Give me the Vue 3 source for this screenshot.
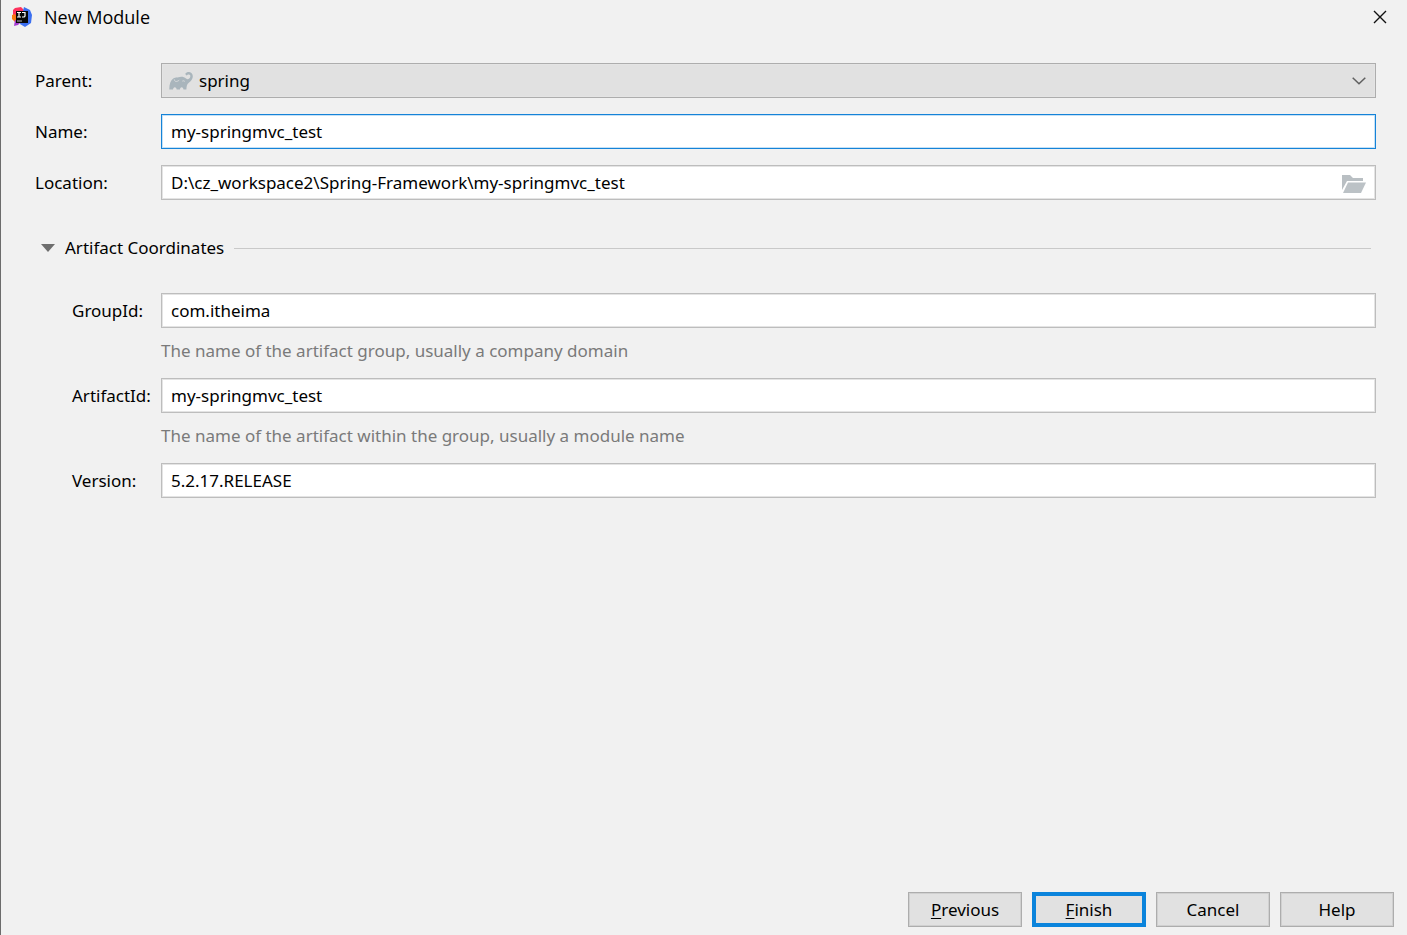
<script setup>
import { ref } from 'vue'

const parent = ref('spring')
const name = ref('my-springmvc_test')
const location = ref('D:\\cz_workspace2\\Spring-Framework\\my-springmvc_test')
const expanded = ref(true)
const coordinates = ref([
  { id: 'groupId', label: 'GroupId:', value: 'com.itheima', hint: 'The name of the artifact group, usually a company domain' },
  { id: 'artifactId', label: 'ArtifactId:', value: 'my-springmvc_test', hint: 'The name of the artifact within the group, usually a module name' },
  { id: 'version', label: 'Version:', value: '5.2.17.RELEASE', hint: '' },
])
</script>

<template>
  <div class="dialog">
    <header class="titlebar">
      <svg class="logo" viewBox="0 0 20 20" aria-hidden="true">
        <path d="M1 3 3 1 9 0 12 3 10 11 1 9Z" fill="#fe315d" />
        <path d="M0 8 3 7 6 14 3 15 0 12Z" fill="#f97a12" />
        <path d="M12 0 18 3 20 8 19 16 13 20 8 17 11 4Z" fill="#3b6ff0" />
        <path d="M2 19 3 13 9 15 6 18Z" fill="#a43bd0" />
        <path d="M4 4H16V16H4Z" fill="#070707" />
        <path d="M5 5.5H9M7 5.5V10M5 10H9M10 5.5H13V9Q13 10 11.5 10H10" fill="none" stroke="#fff" stroke-width="1.2" />
        <path d="M5 14H10" stroke="#bbb" stroke-width="1" />
      </svg>
      <h1>New Module</h1>
      <button class="close" type="button" aria-label="Close">
        <svg viewBox="0 0 14 14"><path d="M1 1 13 13M13 1 1 13" fill="none" stroke="#111" stroke-width="1.4" /></svg>
      </button>
    </header>

    <form class="body" @submit.prevent>
      <div class="row">
        <label for="parent">Parent:</label>
        <div class="control">
          <select id="parent" v-model="parent" class="field">
            <option value="spring">spring</option>
          </select>
          <svg class="elephant" viewBox="0 0 24 18" aria-hidden="true">
            <path d="M.3 17.5C.2 12 1.5 8.2 4.6 6.2 6.5 5.1 8 5.6 9.5 5.2 12 4.2 15.2 4.7 17 6.5 18.5 7.6 20 7.2 20.9 5.8 21.8 4 21.3 2.5 19.9 2.4 18.9 2.3 18.3 2.8 17.6 3.5L16.2 1.9C17.2.6 18.7-.1 20.2.1 23.6.5 24.6 4.1 23.1 7.1 22.3 8.9 20.9 10 19.8 10.8 17.8 12 17.6 14.6 17.4 17.5H14.5C14.4 16.2 13.8 15.2 12.7 15.2S11 16.2 10.9 17.5H7.7C7.6 16.2 6.9 15.2 5.8 15.2S4.1 16.2 4 17.5Z" fill="#a9b5bc" />
            <path d="M5.3 7.4C5.6 9.8 7.5 10.2 10.2 8.2M13.3 9.2C14.1 8.5 15 8.8 15.8 9.5" fill="none" stroke="#e1e1e1" stroke-width=".8" />
          </svg>
          <svg class="chevron" viewBox="0 0 14 8" aria-hidden="true">
            <path d="M.7.7 7 6.8 13.3.7" fill="none" stroke="#606060" stroke-width="1.5" />
          </svg>
        </div>
      </div>
      <div class="row">
        <label for="name">Name:</label>
        <input id="name" v-model="name" class="field active" type="text" />
      </div>
      <div class="row">
        <label for="location">Location:</label>
        <div class="control">
          <input id="location" v-model="location" class="field with-button" type="text" />
          <button class="browse" type="button" aria-label="Browse">
            <svg viewBox="0 0 24 18"><path d="M0 0H8L11 3H21V6H5L0 15Z" fill="#b9bfc3" /><path d="M6 7.5H24L19 18H1Z" fill="#bcc2c6" /></svg>
          </button>
        </div>
      </div>

      <div class="section">
        <button class="toggle" type="button" :aria-expanded="expanded" @click="expanded = !expanded">
          <svg viewBox="0 0 14 8" aria-hidden="true"><path d="M0 0H14L7 8Z" fill="#6e6e6e" /></svg>
          Artifact Coordinates
        </button>
        <span class="rule"></span>
      </div>

      <div v-if="expanded" class="group">
        <div v-for="item in coordinates" :key="item.id" class="row nested">
          <label :for="item.id">{{ item.label }}</label>
          <input :id="item.id" v-model="item.value" class="field" type="text" />
          <p v-if="item.hint" class="hint">{{ item.hint }}</p>
        </div>
      </div>
    </form>

    <footer class="actions">
      <button type="button"><u>P</u>revious</button>
      <button type="button" class="primary"><u>F</u>inish</button>
      <button type="button">Cancel</button>
      <button type="button">Help</button>
    </footer>
  </div>
</template>

<style>
body {
  margin: 0;
  background: #f1f1f1;
}
</style>

<style scoped>
.dialog {
  box-sizing: border-box;
  display: flex;
  flex-direction: column;
  min-height: 100vh;
  border-left: 1px solid #6c6c6c;
  background: #f1f1f1;
  color: #000;
  font: 17px/24px "Noto Sans", "Open Sans", sans-serif;
}

button,
input,
select {
  box-sizing: border-box;
  margin: 0;
  color: inherit;
  font: inherit;
}

button {
  padding: 0;
  border: 0;
  background: none;
}

svg {
  display: block;
}

.titlebar {
  display: flex;
  align-items: center;
  height: 33px;
  padding: 0 20px 0 11px;
}

.logo {
  width: 20px;
  height: 20px;
  margin-right: 12px;
}

h1 {
  flex: 1;
  margin: 0;
  font: 18px/24px "Open Sans", "Noto Sans", sans-serif;
}

.close svg {
  width: 14px;
  height: 14px;
}

.body {
  flex: 1;
  padding: 30px 31px 0 34px;
}

.row {
  display: grid;
  grid-template-columns: 126px 1fr;
  align-items: center;
  margin-bottom: 16px;
}

.control {
  position: relative;
}

.field {
  display: block;
  width: 100%;
  height: 35px;
  padding: 0 9px;
  border: 1px solid #bdbdbd;
  border-radius: 0;
  outline: 0;
  background: #fff;
  box-shadow: inset 0 0 0 1px #e4e4e4;
}

.field.active {
  border-color: #1583d8;
  box-shadow: inset 0 0 0 1px #c5e1f6;
}

.with-button {
  padding-right: 44px;
}

select.field {
  appearance: none;
  padding-left: 37px;
  border-color: #adadad;
  background: #e1e1e1;
}

.elephant {
  position: absolute;
  top: 9px;
  left: 8px;
  width: 24px;
  height: 18px;
  pointer-events: none;
}

.chevron {
  position: absolute;
  top: 14px;
  right: 10px;
  width: 14px;
  height: 8px;
  pointer-events: none;
}

.browse {
  position: absolute;
  top: 10px;
  right: 10px;
}

.browse svg {
  width: 24px;
  height: 18px;
}

.section {
  display: flex;
  align-items: center;
  gap: 10px;
  margin: 36px 5px 33px 6px;
}

.toggle {
  display: flex;
  align-items: center;
  gap: 10px;
}

.toggle svg {
  width: 14px;
  height: 8px;
}

.rule {
  flex: 1;
  height: 1px;
  background: #c9c9c9;
}

.nested {
  padding-left: 37px;
  grid-template-columns: 89px 1fr;
  margin-bottom: 15px;
}

.hint {
  grid-column: 2;
  margin: 11px 0 0;
  color: #7a7a7a;
}

.actions {
  display: flex;
  justify-content: flex-end;
  gap: 10px;
  padding: 0 13px 8px;
}

.actions button {
  width: 114px;
  height: 35px;
  border: 1px solid #adadad;
  background: #e1e1e1;
  box-shadow: inset 0 0 0 1px #d0d0d0;
}

.actions .primary {
  border: 4px solid #0b84dc;
  box-shadow: none;
}

u {
  text-underline-offset: 2px;
  text-decoration-thickness: 1px;
}
</style>
